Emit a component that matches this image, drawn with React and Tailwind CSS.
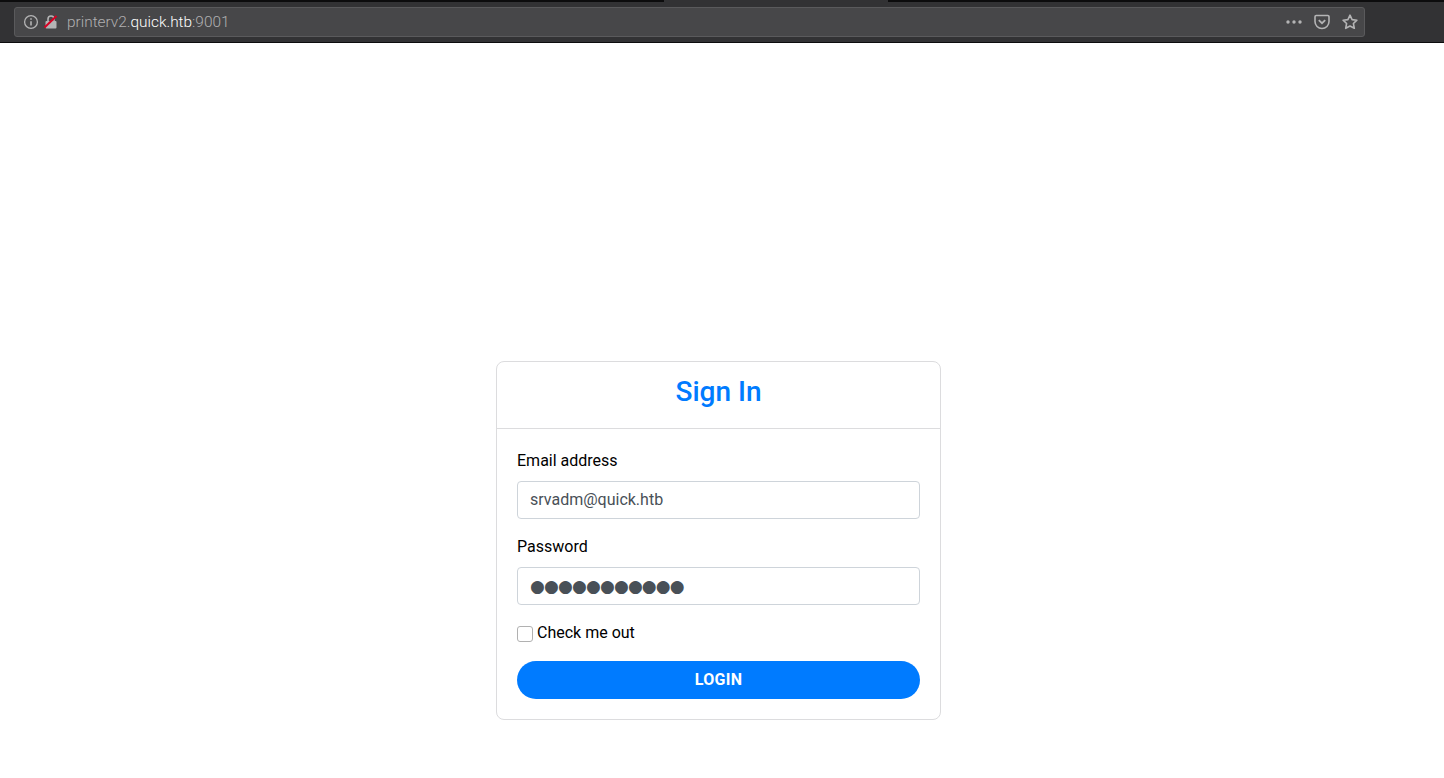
const roboto = "font-['Roboto',sans-serif]";

function Toolbar() {
  return (
    <div className="relative h-[43px] bg-[#323234] border-b border-[#0c0c0d] font-['Roboto',sans-serif]">
      <div className="flex h-[2px]">
        <div className="w-[664px] bg-[#0c0c0d]" />
        <div className="w-[224px]" />
        <div className="flex-1 bg-[#0c0c0d]" />
      </div>
      <div className="flex items-center h-[30px] w-[1351px] ml-[14px] mt-[5px] rounded-[3px] bg-[#474749] border border-[#5a5a5c]">
        <svg width="16" height="16" viewBox="0 0 16 16" className="ml-[8px]" fill="none" stroke="#b4b4b5" strokeWidth="1.3">
          <circle cx="8" cy="8" r="6.4" />
          <path d="M8 7.2v4.4M8 4.2v1.5" strokeWidth="1.6" />
        </svg>
        <svg width="16" height="16" viewBox="0 0 16 16" className="ml-[4px]">
          <path d="M5 7V5a3 3 0 0 1 6 0v2" fill="none" stroke="#b4b4b5" strokeWidth="1.6" />
          <rect x="2.5" y="7" width="11" height="7.5" rx="1" fill="#b4b4b5" />
          <path d="M1.5 13.5 13.5 2" stroke="#d70022" strokeWidth="2" />
        </svg>
        <div className="ml-[8px] mt-[2px] text-[15.4px] font-light text-[#b0b0b1] whitespace-nowrap">
          printerv2.<span className="text-white">quick.htb</span>:9001
        </div>
        <div className="ml-auto flex items-center">
          <svg width="16" height="4" viewBox="0 0 16 4" fill="#b4b4b5">
            <circle cx="2" cy="2" r="1.7" />
            <circle cx="8" cy="2" r="1.7" />
            <circle cx="14" cy="2" r="1.7" />
          </svg>
          <svg width="16" height="16" viewBox="0 0 16 16" className="ml-[12px]" fill="none" stroke="#b4b4b5">
            <path d="M2.2 1.5h11.6a1.2 1.2 0 0 1 1.2 1.2v4.8a7 7 0 0 1-14 0V2.7a1.2 1.2 0 0 1 1.2-1.2Z" strokeWidth="1.6" />
            <path d="m4.8 6.2 3.2 3 3.2-3" strokeWidth="1.8" />
          </svg>
          <svg width="16" height="16" viewBox="0 0 16 16" className="ml-[12px] mr-[6px]" fill="none" stroke="#b4b4b5" strokeWidth="1.6" strokeLinejoin="round">
            <path d="m8 1.2 2.1 4.4 4.8.6-3.5 3.3.9 4.8L8 12l-4.3 2.3.9-4.8L1.1 6.2l4.8-.6Z" />
          </svg>
        </div>
      </div>
    </div>
  );
}

function Field({ label, children }) {
  return (
    <div className="mb-4">
      <label className="block mb-2 text-base leading-6 text-black">{label}</label>
      {children}
    </div>
  );
}

export default function App() {
  return (
    <div className={`min-h-screen bg-white ${roboto}`}>
      <Toolbar />
      <div className="flex justify-center pt-[318px] pr-[7px]">
        <div className="w-[445px] rounded-lg border border-[#dcdcde] bg-white">
          <div className="h-[67px] flex items-center justify-center border-b border-[#dcdcde]">
            <h1 className="text-[28px] leading-[34px] font-medium text-[#007bff] mt-[-6px]">Sign In</h1>
          </div>
          <div className="px-5 pt-5 pb-5">
            <Field label="Email address">
              <input
                readOnly
                value="srvadm@quick.htb"
                className="block w-full h-[38px] px-3 pb-[2px] text-base text-[#495057] bg-white border border-[#ced4da] rounded outline-none"
              />
            </Field>
            <Field label="Password">
              <input
                readOnly
                value="●●●●●●●●●●●"
                className="block w-full h-[38px] px-3 text-[17px] tracking-[-0.85px] text-[#495057] bg-white border border-[#ced4da] rounded outline-none font-['DejaVu_Sans',sans-serif]"
              />
            </Field>
            <div className="flex items-center h-6 mb-4">
              <span className="w-4 h-4 mt-[2px] rounded-[3px] bg-white border border-[#b1b1b1]" />
              <span className="ml-1 text-base leading-6 text-black">Check me out</span>
            </div>
            <button className="block w-full h-[38px] rounded-full bg-[#007bff] text-white text-base font-bold uppercase tracking-[0.3px]">
              Login
            </button>
          </div>
        </div>
      </div>
    </div>
  );
}
